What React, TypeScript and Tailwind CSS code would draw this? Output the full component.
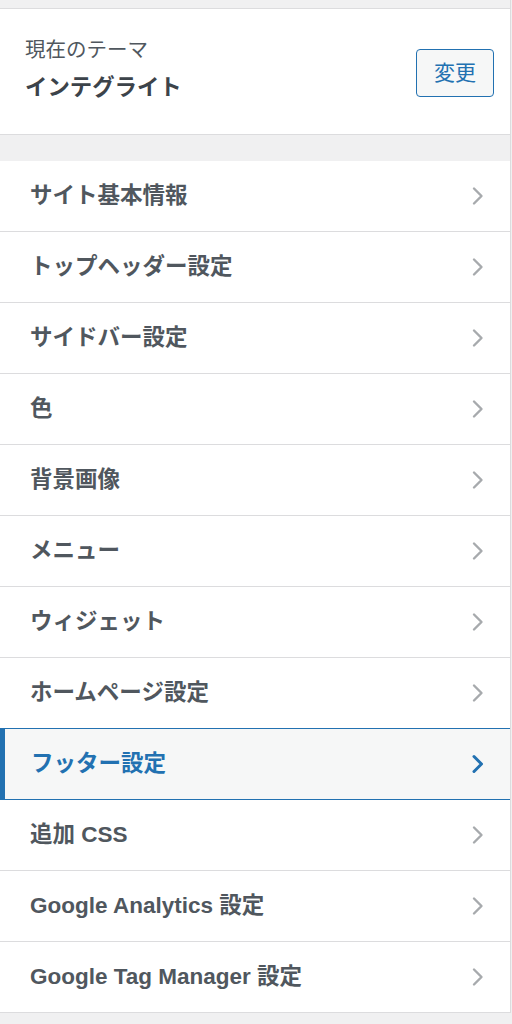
import { useState } from 'react';

const sections = [
  'サイト基本情報',
  'トップヘッダー設定',
  'サイドバー設定',
  '色',
  '背景画像',
  'メニュー',
  'ウィジェット',
  'ホームページ設定',
  'フッター設定',
  '追加 CSS',
  'Google Analytics 設定',
  'Google Tag Manager 設定',
];

const font = { fontFamily: '"Liberation Sans", "Noto Sans CJK JP", sans-serif' };

function Chevron({ active }: { active: boolean }) {
  return (
    <svg
      width="14"
      height="20"
      viewBox="0 0 14 20"
      fill="none"
      className={active ? 'text-[#2271b1]' : 'text-[#a7aaad]'}
    >
      <path
        d="M3 2.5 L10.5 10 L3 17.5"
        stroke="currentColor"
        strokeWidth={active ? 3 : 2.4}
        strokeLinecap="round"
        strokeLinejoin="round"
      />
    </svg>
  );
}

export default function App() {
  const [current, setCurrent] = useState('フッター設定');

  return (
    <div className="min-h-[1024px] w-[512px] bg-[#f0f0f1]" style={font}>
      <div className="w-[511px] border-r border-[#dcdcde]">
        <div className="h-[8px]" />
        {/* 現在のテーマ */}
        <div className="flex h-[127px] items-center justify-between border-y border-[#dcdcde] bg-white pl-[25px] pr-[16px]">
          <div className="mb-[4px] flex flex-col">
            <span className="text-[20.5px] leading-[26px] text-[#50575e]">現在のテーマ</span>
            <span className="mt-[11px] text-[22.4px] font-bold leading-[28px] text-[#3c434a]">
              インテグライト
            </span>
          </div>
          <button
            type="button"
            className="mt-[2px] flex h-[48px] w-[78px] items-center justify-center rounded-[4px] border border-[#2271b1] bg-[#f6f7f7] text-[21px] text-[#2271b1]"
          >
            変更
          </button>
        </div>
        <div className="h-[26px]" />
        <ul className="flex flex-col">
          {sections.map((s) => {
            const active = s === current;
            return (
              <li
                key={s}
                onClick={() => setCurrent(s)}
                className={
                  active
                    ? 'relative -mt-px flex h-[72px] cursor-pointer items-center justify-between border-y border-l-[5px] border-[#2271b1] bg-[#f6f7f7] pl-[26px] pr-[25px]'
                    : 'flex h-[71px] cursor-pointer items-center justify-between border-b border-[#dcdcde] bg-white pl-[30px] pr-[25px]'
                }
              >
                <span
                  className={
                    active
                      ? 'text-[22.5px] font-bold text-[#2271b1]'
                      : 'text-[22.5px] font-bold text-[#50575e]'
                  }
                >
                  {s}
                </span>
                <Chevron active={active} />
              </li>
            );
          })}
        </ul>
      </div>
    </div>
  );
}
